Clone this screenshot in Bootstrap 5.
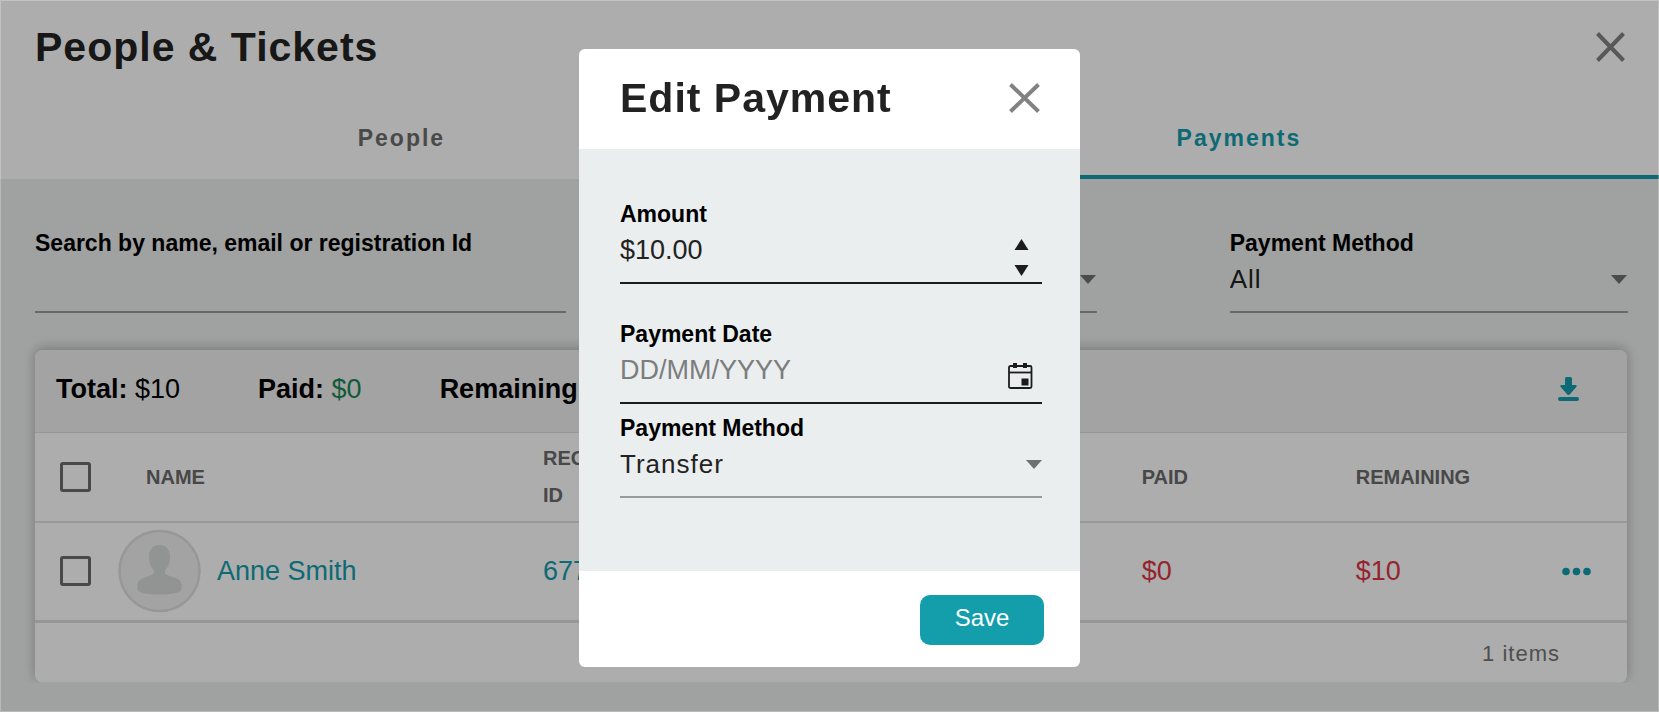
<!DOCTYPE html>
<html lang="en">
<head>
<meta charset="utf-8">
<meta name="viewport" content="width=device-width, initial-scale=1">
<title>People &amp; Tickets</title>
<link href="https://cdn.jsdelivr.net/npm/bootstrap@5.3.0/dist/css/bootstrap.min.css" rel="stylesheet">
<style>
  :root { --teal: #149dab; --ink: #222; --surface: #ebeeef; }
  body { font-family: "Liberation Sans", Arial, sans-serif; color: #000; background: #eceeed; }
  .panel-title { font-size: 41px; font-weight: 700; line-height: 48px; letter-spacing: 1px; color: var(--ink); }
  .close-btn { border: 0; background: none; padding: 0; color: #828282; line-height: 0; }

  .page-head { min-height: 98px; padding: 0 34px 4px 35px; background: #fff; }
  .page-tabs { background: #fff; gap: 16px; }
  .page-tabs .nav-link { height: 81px; padding: 4px 0 0; border-radius: 0; border-bottom: 4px solid transparent; color: #6c6c6c;
    font-size: 23px; font-weight: 700; letter-spacing: 2px; }
  .page-tabs .nav-link.active { color: var(--teal); border-color: var(--teal); }

  .page-body { padding: 48px 32px 29px 35px; }
  .filters { gap: 8vw; margin-right: -1px; }
  .filters > .field { flex: 3 1 0; min-width: 0; }
  .filters > .field-wide { flex-grow: 4; }

  .field label { display: block; font-size: 23px; font-weight: 700; line-height: 32px; white-space: nowrap; }
  .line-control { display: block; width: 100%; height: 54px; padding: 0 0 12px; border: 0; border-bottom: 2px solid #999b9b;
    border-radius: 0; background-color: transparent; color: var(--ink); font-size: 27px; appearance: none; }
  .line-control::placeholder { color: #7b7d7e; opacity: 1; }
  select.line-control { font-size: 26px; letter-spacing: 1px;
    background: url("data:image/svg+xml,%3Csvg xmlns='http://www.w3.org/2000/svg' width='16' height='9'%3E%3Cpath fill='%236f7070' d='M0 0h16L8 9z'/%3E%3C/svg%3E") no-repeat right 0 top 16px; }
  .filters select.line-control { background-position: right 1px top 16px; }
  .line-dark { border-color: #1c1c1c; }
  .field-tools { position: absolute; right: 9px; bottom: 7px; line-height: 0; }
  .field-tools button { border: 0; background: none; padding: 0; color: #1c1c1c; }

  .sheet { background: #fff; border-radius: 8px; box-shadow: 0 -2px 12px rgba(0,0,0,.26); clip-path: inset(-20px -20px 0 -20px); margin-top: 37px; }
  .sheet-head { min-height: 83px; padding: 0 48px 4px 21px; gap: 78px; background: #f1f1f1; border-bottom: 1px solid #dedede;
    border-radius: 8px 8px 0 0; font-size: 27px; }
  .people { table-layout: fixed; width: 100%; color: #6a6a6a; }
  .people th { height: 89px; padding: 0; font-size: 20px; line-height: 37px; border-bottom: 2px solid #e0e0e0; vertical-align: middle; }
  .people td { height: 99px; padding: 0; font-size: 27px; border-bottom: 3px solid #dedede; vertical-align: middle; }
  .people a { color: var(--teal); text-decoration: none; }
  .w-check { width: 83px; } .w-name { width: 26.7%; } .w-reg { width: 10.7%; } .w-sum { width: 13.45%; }
  .w-act { width: 71px; }
  .box-check { display: block; width: 31px; height: 30px; margin-left: 25px; border: 3px solid #6c6c6c; border-radius: 3px; appearance: none; background: #fff; }
  .money-out { color: #dc3545; } .money-in { color: #198754; }
  .sheet-foot { min-height: 60px; padding: 2px 67px 0 0; font-size: 22px; letter-spacing: 1px; color: #757575; }

  .dim { position: fixed; inset: 0; z-index: 1040; background: rgba(0,0,0,.32); border: 1px solid rgba(255,255,255,.25); }
  .pay-dialog { max-width: 501px; margin-top: 49px; }
  .pay-dialog .modal-content { border: 0; border-radius: 6px; overflow: hidden; }
  .pay-dialog .modal-header { min-height: 100px; padding: 0 40px 2px 41px; border: 0; }
  .pay-dialog .modal-body { padding: 49px 38px 73px 41px; background: var(--surface); }
  .pay-dialog .modal-footer { padding: 24px 36px 22px; border: 0; }
  .save-btn { width: 124px; height: 50px; padding: 0 0 4px; border: 0; border-radius: 10px; background: var(--teal); color: #fff; font-size: 24px; }
  .gap-field { margin-bottom: 34px; }
</style>
</head>
<body>
<header class="page-head d-flex align-items-center justify-content-between">
  <h1 class="panel-title m-0">People &amp; Tickets</h1>
  <button class="close-btn" type="button" aria-label="Close panel">
    <svg width="29" height="30" viewBox="0 0 29 30" fill="none" stroke="currentColor" stroke-width="4"><path d="M1.500 1.500l26 27M27.500 1.500l-26 27"/></svg>
  </button>
</header>
<nav class="page-tabs nav d-flex">
  <a class="nav-link d-flex flex-fill align-items-center justify-content-center" href="#people">People</a>
  <a class="nav-link d-flex flex-fill align-items-center justify-content-center active" href="#payments" aria-current="page">Payments</a>
</nav>

<main class="page-body">
  <form class="filters d-flex">
    <div class="field field-wide">
      <label for="search">Search by name, email or registration Id</label>
      <input class="line-control" id="search" type="text">
    </div>
    <div class="field">
      <label for="status">Payment Status</label>
      <select class="line-control" id="status"><option>All</option></select>
    </div>
    <div class="field">
      <label for="method-filter">Payment Method</label>
      <select class="line-control" id="method-filter"><option>All</option></select>
    </div>
  </form>

  <section class="sheet">
    <div class="sheet-head d-flex align-items-center">
      <span><strong>Total:</strong> $10</span>
      <span><strong>Paid:</strong> <span class="money-in">$0</span></span>
      <span><strong>Remaining:</strong> <span class="money-out">$10</span></span>
      <button class="close-btn ms-auto" type="button" aria-label="Download">
        <svg width="21" height="24" viewBox="0 0 21 24" fill="#149dab"><path d="M8.500 0h4q1.500 0 1.500 1.500V8h3.500q2 .3.800 2l-6.600 7.500q-1.200 1-2.400 0L2.700 10Q1.500 8.300 3.500 8H7V1.500Q7 0 8.500 0z"/><rect y="20" width="21" height="4" rx="2"/></svg>
      </button>
    </div>
    <table class="people">
      <thead>
        <tr>
          <th class="w-check"><input class="box-check" type="checkbox" aria-label="Select all"></th>
          <th class="w-name ps-4"><span class="ps-1">NAME</span></th>
          <th class="w-reg">REGISTRATION ID</th>
          <th class="w-sum">TICKETS</th>
          <th class="w-sum">TOTAL</th>
          <th class="w-sum">PAID</th>
          <th>REMAINING</th>
          <th class="w-act"></th>
        </tr>
      </thead>
      <tbody>
        <tr>
          <td><input class="box-check" type="checkbox" aria-label="Select Anne Smith"></td>
          <td>
            <div class="d-flex align-items-center">
              <svg width="83" height="84" viewBox="0 0 83 84"><circle cx="41.500" cy="42" r="40" fill="#f0f0f0" stroke="#dfdfdf" stroke-width="2.500"/><path fill="#d6dad9" d="M41.500 16c7 0 10.500 5 10.500 12 0 6-2 10-4.500 13-1.500 3 0 4.500 3 5.500 7 2.500 13 3.500 13 9v5c0 3-10 5-22 5s-22-2-22-5v-5c0-5.500 6-6.500 13-9 3-1 4.500-2.500 3-5.500C33 38 31 34 31 28c0-7 3.500-12 10.500-12z"/></svg>
              <a class="ms-3" href="#anne">Anne Smith</a>
            </div>
          </td>
          <td><a href="#registration">677120</a></td>
          <td>1</td>
          <td>$10</td>
          <td class="money-out">$0</td>
          <td class="money-out">$10</td>
          <td>
            <button class="close-btn d-block" type="button" aria-label="More actions">
              <svg width="36" height="9" viewBox="0 0 36 9" fill="#149dab"><circle cx="10" cy="4.500" r="3.800"/><circle cx="20.500" cy="4.500" r="3.800"/><circle cx="31" cy="4.500" r="3.800"/></svg>
            </button>
          </td>
        </tr>
      </tbody>
    </table>
    <div class="sheet-foot d-flex align-items-center justify-content-end">1 items</div>
  </section>
</main>

<div class="dim"></div>
<div class="modal d-block" role="dialog" aria-modal="true" aria-labelledby="edit-title">
  <div class="modal-dialog pay-dialog">
    <form class="modal-content">
      <div class="modal-header d-flex align-items-center justify-content-between">
        <h2 class="panel-title m-0" id="edit-title">Edit Payment</h2>
        <button class="close-btn" type="button" aria-label="Close">
          <svg width="31" height="30" viewBox="0 0 31 30" fill="none" stroke="currentColor" stroke-width="4"><path d="M1.500 1.500l28 27M29.500 1.500l-28 27"/></svg>
        </button>
      </div>
      <div class="modal-body">
        <div class="field position-relative gap-field">
          <label for="amount">Amount</label>
          <input class="line-control line-dark" id="amount" type="text" value="$10.00">
          <div class="field-tools d-flex flex-column pe-1">
            <button type="button" aria-label="Increase"><svg width="15" height="25" viewBox="0 0 15 25" fill="currentColor"><path d="M7.500 0L14.500 11H.5z"/></svg></button>
            <button type="button" aria-label="Decrease"><svg width="15" height="13" viewBox="0 0 15 13" fill="currentColor"><path d="M.5 1h14l-7 11z"/></svg></button>
          </div>
        </div>
        <div class="field position-relative mb-2">
          <label for="date">Payment Date</label>
          <input class="line-control line-dark" id="date" type="text" placeholder="DD/MM/YYYY">
          <div class="field-tools">
            <button class="mb-2" type="button" aria-label="Open calendar">
              <svg width="25" height="26" viewBox="0 0 25 26"><g fill="none" stroke="#1c1c1c" stroke-width="1.800"><rect x="1" y="3" width="22.500" height="22" rx="1.500"/><path d="M1 9.500h22.500"/></g><path fill="#1c1c1c" d="M5 0h4v5H5zM15 0h4v5h-4zM13.500 15.500h7v7h-7z"/></svg>
            </button>
          </div>
        </div>
        <div class="field">
          <label for="method">Payment Method</label>
          <select class="line-control" id="method"><option>Transfer</option></select>
        </div>
      </div>
      <div class="modal-footer">
        <button class="save-btn m-0" type="button">Save</button>
      </div>
    </form>
  </div>
</div>
<script src="https://cdn.jsdelivr.net/npm/bootstrap@5.3.0/dist/js/bootstrap.bundle.min.js"></script>
</body>
</html>
